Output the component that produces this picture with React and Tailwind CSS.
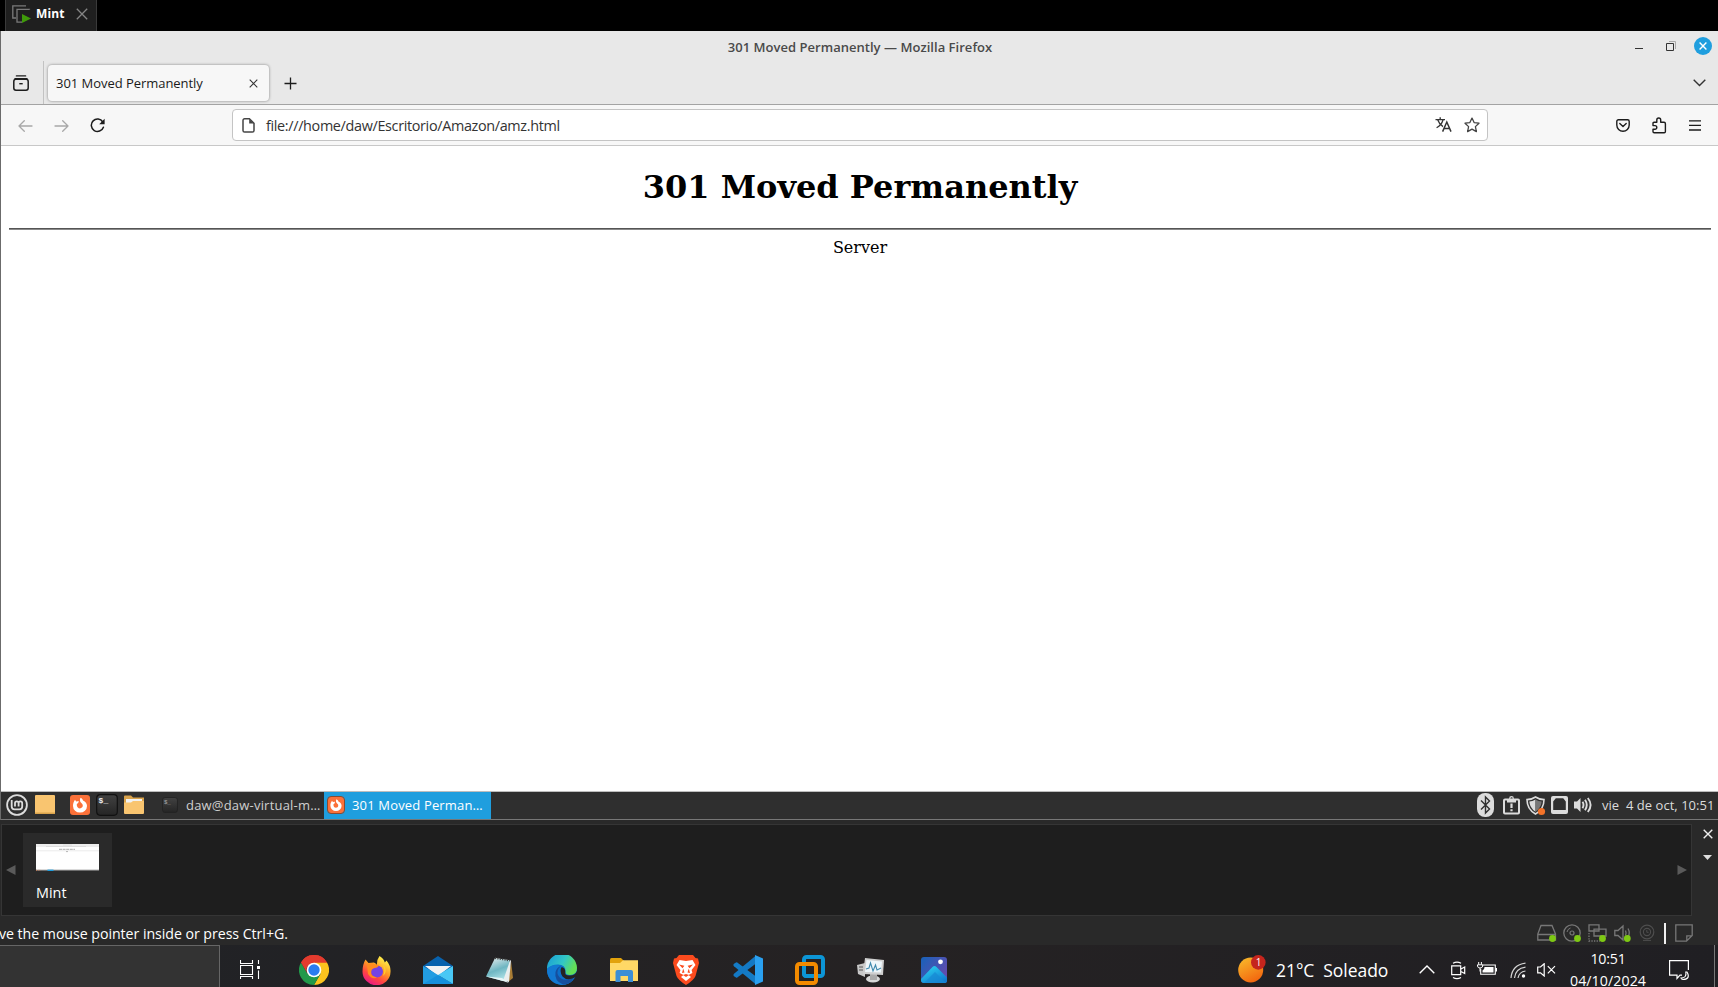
import React from "react";

const UI = "font-['Open_Sans','Noto_Sans',sans-serif] whitespace-pre";

function Svg({ w, h, box, className = "", children }) {
  return (
    <svg width={w} height={h} viewBox={box || `0 0 ${w} ${h}`} className={`block shrink-0 ${className}`} fill="none">
      {children}
    </svg>
  );
}

function VmTabs() {
  return (
    <div className="flex h-[31px] bg-black pl-[5px]">
      <div className="flex w-[92px] border-x border-[#3a3a3a] bg-[#1f1f1f] pl-1.5 pt-[5px]">
        <Svg w={20} h={19}>
          <path d="M4 13H.8V.8H14M17.5 4.5V4.3H5V17.2H10" stroke="#7a7a7a" strokeWidth="1.3" />
          <path d="M10 9L19 13.5 10 18z" fill="#3f9a0a" />
        </Svg>
        <span className={`${UI} ml-[4px] text-[12px] font-bold leading-[18px] tracking-[0.1px] text-white`}>Mint</span>
        <Svg w={12} h={12} className="ml-[12px] mt-[3px]">
          <path d="M.8.8L11.2 11.2M11.2.8L.8 11.2" stroke="#858585" strokeWidth="1.3" />
        </Svg>
      </div>
    </div>
  );
}

function TitleBar() {
  return (
    <div className="flex h-[30px] bg-[#e8e8e8]">
      <div className="w-[101px]" />
      <div className={`${UI} flex-1 pt-[7px] text-center text-[13px] font-semibold leading-[18px] tracking-[0.03px] text-[#4a4a4a]`}>
        301 Moved Permanently — Mozilla Firefox
      </div>
      <div className="flex w-[100px] pl-[17px] pt-[6px]">
        <Svg w={8} h={18}><path d="M0 11.5H8" stroke="#333" /></Svg>
        <Svg w={11} h={18} className="ml-[23px]">
          <path d="M3 4.5H9.5V12" stroke="#aaa" />
          <path d="M.5 6.5H7.5V13.5H.5z" stroke="#333" />
        </Svg>
        <Svg w={18} h={18} className="ml-[17px]">
          <circle cx="9" cy="9" r="9" fill="#1f9ede" />
          <path d="M5.6 5.6L12.4 12.4M12.4 5.6L5.6 12.4" stroke="#fff" strokeWidth="1.4" />
        </Svg>
      </div>
    </div>
  );
}

function TabStrip() {
  return (
    <div className="flex h-[44px] border-b border-[#a3a3a3] bg-[#e8e8e8]">
      <Svg w={16} h={16} className="ml-3 mt-[14px]">
        <path d="M3.4.9H12.6M2 3.8H14" stroke="#1c1c1c" strokeWidth="1.4" strokeLinecap="round" />
        <rect x=".8" y="4.2" width="14.4" height="11" rx="2.2" stroke="#1c1c1c" strokeWidth="1.5" />
        <path d="M6.3 8.7H9.7" stroke="#1c1c1c" strokeWidth="1.4" />
      </Svg>
      <div className="ml-[14px] w-px bg-[#c2c2c2]" />
      <div className="ml-1 mt-[4px] flex h-[36px] w-[221px] rounded-[4px] bg-[#f7f7f7] pl-[8px] shadow-[0_0_3px_rgba(0,0,0,0.45)]">
        <span className={`${UI} w-[193px] text-[13px] leading-[36px] tracking-[-0.04px] text-[#1a1a1a]`}>301 Moved Permanently</span>
        <Svg w={9} h={9} className="mt-[14px]"><path d="M.7.7L8.3 8.3M8.3.7L.7 8.3" stroke="#333" strokeWidth="1.1" /></Svg>
      </div>
      <Svg w={13} h={13} className="ml-[15px] mt-4"><path d="M6.5.5V12.5M.5 6.5H12.5" stroke="#1c1c1c" strokeWidth="1.3" /></Svg>
      <div className="flex-1" />
      <Svg w={13} h={8} className="mr-[12px] mt-[18px]"><path d="M.7.7L6.5 6.5 12.3.7" stroke="#333" strokeWidth="1.4" /></Svg>
    </div>
  );
}

function NavBar() {
  return (
    <div className="flex h-[41px] items-start border-b border-[#c8c8c8] bg-[#f7f7f7] pt-[4px]">
      <Svg w={15} h={12} className="ml-[17px] mt-[11px]"><path d="M14 6H1M6.3.7L1 6 6.3 11.3" stroke="#a8a8a8" strokeWidth="1.3" strokeLinecap="round" strokeLinejoin="round" /></Svg>
      <Svg w={15} h={12} className="ml-[21px] mt-[11px]"><path d="M1 6H14M8.7.7L14 6 8.7 11.3" stroke="#a8a8a8" strokeWidth="1.3" strokeLinecap="round" strokeLinejoin="round" /></Svg>
      <Svg w={16} h={16} className="ml-[21px] mt-[9px]">
        <path d="M12.8 4A6.2 6.2 0 1 0 13.4 9.2" stroke="#1c1c1c" strokeWidth="1.5" strokeLinecap="round" />
        <path d="M14.6.8V6.3H9.2z" fill="#1c1c1c" />
      </Svg>
      <div className="ml-[126px] flex h-[32px] w-[1256px] rounded-[4px] border border-[#c4c4c4] bg-white pl-[9px]">
        <Svg w={13} h={15} className="mt-[8px]">
          <path d="M2.6.8H7.4L12 5.2V12.4A1.6 1.6 0 0 1 10.4 14H2.6A1.6 1.6 0 0 1 1 12.4V2.4A1.6 1.6 0 0 1 2.6.8z" stroke="#444" strokeWidth="1.5" />
          <path d="M7.2 1V5.4H12z" fill="#444" />
        </Svg>
        <span className={`${UI} ml-[11px] flex-1 text-[14.4px] leading-[31px] tracking-[-0.34px] text-[#333]`}>file:///home/daw/Escritorio/Amazon/amz.html</span>
        <Svg w={17} h={15} className="mr-[12px] mt-[7px]">
          <path d="M.5 2.6H10M5.2.3V2.4M8 3C7 6.5 4.8 9 1.6 10.8M2.8 3C3.8 6 5.6 8 8 9.6" stroke="#333" strokeWidth="1.3" />
          <path d="M7.6 14.6L11.8 5 16 14.6M9.1 11.4H14.5" stroke="#333" strokeWidth="1.5" />
        </Svg>
        <Svg w={16} h={16} className="mr-[7px] mt-[7px]">
          <path d="M8 1.1L10.1 5.6 15 6.2 11.4 9.6 12.4 14.6 8 12.1 3.6 14.6 4.6 9.6 1 6.2 5.9 5.6z" stroke="#444" strokeWidth="1.3" strokeLinejoin="round" />
        </Svg>
      </div>
      <div className="flex-1" />
      <Svg w={14} h={13} className="mt-[10px]">
        <path d="M2.4.8H11.6A1.6 1.6 0 0 1 13.2 2.4V6A6.2 6.2 0 0 1 .8 6V2.4A1.6 1.6 0 0 1 2.4.8z" stroke="#1c1c1c" strokeWidth="1.4" />
        <path d="M3.8 4.6L7 7.6 10.2 4.6" stroke="#1c1c1c" strokeWidth="1.4" strokeLinecap="round" strokeLinejoin="round" />
      </Svg>
      <Svg w={15} h={17} className="ml-[22px] mt-[8px]">
        <path d="M2 5.2H4.8V3A1.9 1.9 0 0 1 8.7 3V5.2H12A1.5 1.5 0 0 1 13.4 6.7V14.5A1.2 1.2 0 0 1 12.2 15.7H2.2A1.2 1.2 0 0 1 1 14.5V12.2H3A1.8 1.8 0 0 0 3 8.6H1V6.2A1 1 0 0 1 2 5.2z" stroke="#1c1c1c" strokeWidth="1.4" strokeLinejoin="round" />
      </Svg>
      <Svg w={12} h={11} className="ml-[22px] mr-[17px] mt-[11px]"><path d="M0 .8H12M0 5.4H12M0 10H12" stroke="#1c1c1c" strokeWidth="1.3" /></Svg>
    </div>
  );
}

function Page() {
  return (
    <div className="h-[645px] bg-white pl-2 pr-[7px] pt-[22px] text-center font-['DejaVu_Serif',serif] text-black">
      <h1 className="text-[32px] font-bold leading-[38px]">301 Moved Permanently</h1>
      <div className="mt-[22px] h-[2px] border-t border-[#555] bg-[#8a8a8a]" />
      <p className="mt-[8px] text-[16px] leading-[19px]">Server</p>
    </div>
  );
}

function FirefoxMono({ size }) {
  return (
    <Svg w={size} h={size} box="0 0 20 20">
      <rect width="20" height="20" rx="3" fill="#fb7139" />
      <path d="M10.5 2.8C12 3.5 12.8 4.5 13 5.5 15.5 6.5 17 8.5 17 11A7 6.6 0 0 1 3 11C3 8.5 3.6 6.6 5 4.7L6.2 6.4 8.8 6 8.2 8 6.8 9C6.2 14.5 12.8 14.6 12.8 10.6 12.8 8.8 11.6 8.4 10.6 7.2 9.8 6 9.8 4.4 10.5 2.8z" fill="#fff" />
    </Svg>
  );
}

function Terminal({ size, dim }) {
  return (
    <Svg w={size} h={size} box="0 0 22 22">
      <rect x=".7" y=".7" width="20.6" height="20.6" rx="3.5" fill="url(#term)" stroke={dim ? "#222" : "#111"} strokeWidth="1.2" />
      <defs><linearGradient id="term" x2="0" y2="1"><stop stopColor="#424242" /><stop offset="1" stopColor="#252525" /></linearGradient></defs>
      <text x="2.6" y="9.3" fontSize="8" fontWeight="700" fontFamily="Liberation Mono, monospace" fill={dim ? "#999" : "#eee"}>$_</text>
    </Svg>
  );
}

function MintPanel() {
  return (
    <div className="flex h-[29px] border-b border-t border-b-[#777] border-t-[#bdbdbd] bg-[#2f2f2f]">
      <Svg w={22} h={22} className="ml-[5px] mt-[2px]">
        <circle cx="11" cy="11" r="9.9" stroke="#dcdcdc" strokeWidth="1.8" />
        <path d="M5.7 6V12.5Q5.7 15.3 8.5 15.3H13.4Q16.2 15.3 16.2 12.5V9.2Q16.2 7.4 14.3 7.4 12.6 7.4 12.6 9.2V12.6M12.6 9.2Q12.6 7.4 10.8 7.4 9 7.4 9 9.2V12.6" stroke="#dcdcdc" strokeWidth="1.8" />
      </Svg>
      <Svg w={20} h={19} className="ml-[7px] mt-[3px]"><rect width="20" height="19" rx="1" fill="#f9c570" /><path d="M0 17.5H20V19H0z" fill="#d9a34c" /></Svg>
      <div className="ml-[15px] mt-[3px]"><FirefoxMono size={20} /></div>
      <div className="ml-[6px] mt-[2px]"><Terminal size={22} /></div>
      <Svg w={20} h={19} className="ml-[6px] mt-[3px]">
        <path d="M0 1.5Q0 .5 1 .5H7L9 2.5H20V18H0z" fill="#d9a34c" />
        <rect x="2" y="4" width="16" height="7" fill="#f2f2f2" />
        <path d="M0 7.5H7L9 6H20V18Q20 19 19 19H1Q0 19 0 18z" fill="#f9c570" />
      </Svg>
      <div className="ml-[18px] mt-[5px]"><Terminal size={16} dim /></div>
      <span className={`${UI} ml-[8px] w-[138px] text-[13px] leading-[27px] tracking-[0.2px] text-[#cfcfcf]`}>daw@daw-virtual-m…</span>
      <div className="flex w-[167px] bg-[#1f9ede] pl-[4px]">
        <div className="mt-[5px] h-[16px] w-[16px] rounded-[3px] outline outline-1 outline-[#8a4a30]"><FirefoxMono size={16} /></div>
        <span className={`${UI} ml-[8px] text-[13px] leading-[27px] tracking-[0.16px] text-white`}>301 Moved Perman…</span>
      </div>
      <div className="flex-1" />
      <Svg w={17} h={24} className="mt-[1px]">
        <rect width="17" height="24" rx="8" fill="#dcdcdc" />
        <path d="M4 7.5L12.5 16 8.5 20V4L12.5 8 4 16.5" stroke="#2f2f2f" strokeWidth="1.4" />
      </Svg>
      <Svg w={17} h={19} className="ml-[9px] mt-[4px]">
        <rect x="1" y="3.5" width="15" height="14" rx="1" stroke="#dcdcdc" strokeWidth="2" />
        <path d="M4 3.5H13V6.5H4z" fill="#dcdcdc" /><circle cx="8.5" cy="2.5" r="1.8" stroke="#dcdcdc" strokeWidth="1.2" />
        <path d="M7.4 7.5H9.6V12H7.4zM7.4 13.2H9.6V15.2H7.4z" fill="#dcdcdc" />
      </Svg>
      <Svg w={20} h={20} className="ml-[6px] mt-[4px]">
        <path d="M9.5 1Q13 3.5 18 3.6 18 13.5 9.5 18 1 13.5 1 3.6 6 3.5 9.5 1z" stroke="#dcdcdc" strokeWidth="1.6" />
        <path d="M9.5 3.4Q6.6 5.3 3.3 5.4 4 12 9.5 15.8z" fill="#dcdcdc" /><path d="M9.5 3.4Q12.4 5.3 15.7 5.4 15 12 9.5 15.8z" fill="#777" />
        <circle cx="15.5" cy="15.5" r="3.6" fill="#f37329" />
      </Svg>
      <Svg w={17} h={18} className="ml-[5px] mt-[4px]">
        <rect width="17" height="18" rx="2" fill="#dcdcdc" />
        <path d="M2.2 5.4L4.8 2.2H12.2L14.8 5.4V14H2.2z" fill="#2f2f2f" />
      </Svg>
      <Svg w={19} h={18} className="ml-[6px] mt-[4px]">
        <path d="M0 5.5H3L6.5 2V16L3 12.5H0z" fill="#dcdcdc" />
        <path d="M8.5 5.8Q10.5 9 8.5 12.2M11 3.8Q14.5 9 11 14.2M13.8 2Q19.4 9 13.8 16" stroke="#dcdcdc" strokeWidth="1.9" />
      </Svg>
      <span className={`${UI} ml-[9px] mr-[3px] w-[113px] text-[13px] leading-[27px] tracking-[0.03px] text-[#dcdcdc]`}>vie  4 de oct, 10:51</span>
    </div>
  );
}

function Library() {
  return (
    <div className="flex h-[96px] bg-[#292929] pl-px pt-[4px]">
      <div className="flex h-[92px] w-[1691px] border border-[#353535] bg-[#1e1e1e]">
        <Svg w={10} h={10} className="ml-[3.5px] mt-[40px]"><path d="M9.5 0V10L0 5z" fill="#5a5a5a" /></Svg>
        <div className="ml-[7.5px] mt-[8px] h-[74px] w-[89px] bg-[#2a2a2a] pl-[13px] pt-[11px]">
          <Svg w={63} h={27}>
            <rect width="63" height="27" fill="#fff" /><rect width="63" height="3" fill="#ededed" />
            <path d="M10 2.5H50M27 1H36" stroke="#d8d8d8" strokeWidth=".8" /><path d="M23 5.3H39" stroke="#aaa" strokeWidth="1" strokeDasharray="3 .6" />
            <path d="M0 6.8H63" stroke="#ddd" strokeWidth=".6" /><path d="M30 7.6H32" stroke="#999" strokeWidth=".7" />
            <path d="M0 26.3H63" stroke="#494949" /><path d="M0 26.3H5" stroke="#c77950" strokeDasharray="1 1.4" /><path d="M11.5 26.3H17.5" stroke="#1f9ede" strokeWidth="1.4" />
          </Svg>
          <div className={`${UI} mt-[12px] text-[14.4px] leading-[20px] tracking-[0px] text-white`}>Mint</div>
        </div>
        <div className="flex-1" />
        <Svg w={10} h={10} className="mr-[4.5px] mt-[40px]"><path d="M.5 0V10L10 5z" fill="#5a5a5a" /></Svg>
      </div>
      <div className="pl-[10.5px] pt-[5px]">
        <Svg w={10} h={10}><path d="M.7.7L9.3 9.3M9.3.7L.7 9.3" stroke="#eee" strokeWidth="1.4" /></Svg>
        <Svg w={9} h={5} className="mt-[16px]"><path d="M0 0H9L4.5 5z" fill="#ddd" /></Svg>
      </div>
    </div>
  );
}

function Dot({ x, y }) {
  return <circle cx={x} cy={y} r="3.4" fill="#7ec814" />;
}

function StatusBar() {
  return (
    <div className="flex h-[29px] overflow-hidden bg-[#292929]">
      <span className={`${UI} -ml-[1px] pt-[7px] text-[14.2px] leading-[22px] tracking-[-0.05px] text-white`}>ve the mouse pointer inside or press Ctrl+G.</span>
      <div className="flex-1" />
      <Svg w={20} h={20} className="mt-[8px]">
        <path d="M4 1.5H15L18.5 10V16H.8V10z M.8 10.5H18.5" stroke="#777" strokeWidth="1.3" /><Dot x={15.5} y={14.5} />
      </Svg>
      <Svg w={19} h={20} className="ml-[6px] mt-[8px]">
        <circle cx="9" cy="9" r="8.2" stroke="#777" strokeWidth="1.3" /><circle cx="9" cy="9" r="2" stroke="#777" strokeWidth="1.2" /><path d="M4 8Q4.5 5 7.5 4" stroke="#777" /><Dot x={14.5} y={14.5} />
      </Svg>
      <Svg w={19} h={20} className="ml-[6px] mt-[8px]">
        <path d="M1 .8H11V7H1zM6 5.2H18V12H6z" stroke="#777" strokeWidth="1.3" /><path d="M1 9V17H12" stroke="#777" strokeDasharray="1.3 1.3" strokeWidth="1.3" /><Dot x={14.5} y={14.5} />
      </Svg>
      <Svg w={18} h={20} className="ml-[7px] mt-[8px]">
        <path d="M.8 6.5H4L9 2V16L4 11.5H.8zM11.5 6.5Q12.7 9 11.5 11.5M14 4.5Q16.5 9 14 13" stroke="#777" strokeWidth="1.3" /><Dot x={13.3} y={14.5} />
      </Svg>
      <Svg w={16} h={17} className="ml-[7px] mt-[8px]">
        <circle cx="8" cy="8" r="6.8" stroke="#4e4e4e" strokeWidth="1.2" /><circle cx="8" cy="8" r="3.6" stroke="#4e4e4e" strokeWidth="1.1" /><path d="M7.8 6V8.3H9.6M4 16.4H12" stroke="#4e4e4e" />
      </Svg>
      <div className="ml-[9px] mt-[7px] h-[21px] w-[2px] bg-[#f0f0f0]" />
      <Svg w={18} h={18} className="ml-[9px] mr-[25px] mt-[8px]"><path d="M.8.8H17.2V11.5L11.5 17.2H.8zM17 11.8H11.8V17" stroke="#777" strokeWidth="1.3" /></Svg>
    </div>
  );
}

function Cell({ children, first }) {
  return <div className={`flex h-full items-center justify-center ${first ? "mr-[5px] w-[57px]" : "w-[62px]"}`}>{children}</div>;
}

function Taskbar() {
  return (
    <div className="flex h-[42px] overflow-hidden bg-gradient-to-r from-[#202226] via-[#252223] to-[#201f23]">
      <div className="h-[60px] w-[220px] shrink-0 border-r border-t border-[#666] bg-[#333]" />
      <div className="flex h-[50px] pl-px">
        <Cell first>
          <Svg w={20} h={19} className="-mt-px"><path d="M.5 0V3.5H12.5V0M.5 5.5H12.5V14.5H.5zM.5 19V16.5H12.5V19M18.5 0V4M18.5 10.5V19" stroke="#fff" strokeWidth="1.1" /><rect x="17" y="6" width="3" height="3" fill="#fff" /></Svg>
        </Cell>
        <Cell>
          <Svg w={30} h={30}>
            <path d="M15 15L2 7.5A15 15 0 0 1 28 7.5z" fill="#e33b2e" /><path d="M15 15V7.5H28A15 15 0 0 1 15 30L21.5 18.7z" fill="#fcc31e" />
            <path d="M15 15L21.5 18.7 15 30A15 15 0 0 1 2 7.5L8.5 18.8z" fill="#22994a" /><path d="M2 7.5A15 15 0 0 1 28 7.5H15A7.5 7.5 0 0 0 8.5 18.7z" fill="#e33b2e" />
            <circle cx="15" cy="15" r="7.3" fill="#fff" /><circle cx="15" cy="15" r="5.7" fill="#2b7cf0" />
          </Svg>
        </Cell>
        <Cell>
          <Svg w={29} h={29}>
            <defs><linearGradient id="ff" x1=".8" y1=".1" x2=".3" y2="1"><stop stopColor="#fff04a" /><stop offset=".4" stopColor="#ff9a24" /><stop offset=".7" stopColor="#ff4641" /><stop offset="1" stopColor="#e8178a" /></linearGradient></defs>
            <path d="M17.5 0Q22 2.6 22.8 6.5L24.5 4.5Q29 10 28.5 16A14 13.5 0 0 1 .5 15.5Q.5 8.5 3.5 3.5L6.5 7 12 6.5Q14.5 7.5 15 9.5 14.5 4 17.5 0z" fill="url(#ff)" />
            <circle cx="15" cy="15.5" r="6" fill="#7543e5" /><path d="M5 9Q9 6 14 8.5L17 9Q16 12 12.5 12 9 13 9.2 16 8 20 15 21.5 10 24 6 18z" fill="#ff8c20" /><path d="M18 7Q25 12 21 20 25 17 23 11z" fill="#ffd12e" />
          </Svg>
        </Cell>
        <Cell>
          <Svg w={30} h={28}>
            <path d="M0 10L15 0 30 10V20H0z" fill="#0862ad" /><path d="M2 10H28L15 20z" fill="#f3f3f3" />
            <path d="M0 10L15 19 30 28H0z" fill="#229de2" /><path d="M30 10L15 19 30 28z" fill="#49c8f5" /><path d="M15 19L30 28H0z" fill="#1690dc" />
          </Svg>
        </Cell>
        <Cell>
          <Svg w={28} h={28}>
            <defs><linearGradient id="np" x1=".3" x2=".7" y2="1"><stop stopColor="#d9e6e8" /><stop offset=".5" stopColor="#6eb6c2" /><stop offset="1" stopColor="#b8e8ec" /></linearGradient></defs>
            <path d="M25 5L27 22 22 26z" fill="#a87c35" /><path d="M9 2L25 4.5 23 26 14 24z" fill="#e9eeee" /><path d="M9 2L24 4.5 17 25 0 20.5z" fill="url(#np)" /><path d="M9 2L24 4.5" stroke="#444" strokeWidth="2" strokeDasharray="1.2 1.2" /><path d="M0 20.5L17 25 23 27 16 22z" fill="#e7f6f7" />
          </Svg>
        </Cell>
        <Cell>
          <Svg w={30} h={30}>
            <defs><linearGradient id="ed" x1="0" x2="1" y2=".4"><stop stopColor="#179ad8" /><stop offset=".6" stopColor="#32c6c6" /><stop offset="1" stopColor="#63df56" /></linearGradient></defs>
            <circle cx="15" cy="15" r="15" fill="#0b6fca" /><path d="M0 14A15 15 0 0 1 30 13Q30 20 23 20 18 20 18.5 16.5 19 10 11 9.5 4 9.5 0 14z" fill="url(#ed)" />
            <path d="M14 11Q8 14 9.5 20 12 27 21 25.5 25 25 28 22 23 30 15 30 0 28 0 14 6 8 14 11z" fill="#1279d2" /><path d="M14 11Q9 15 11 20 15 28 27 22.5 23 30 16 29.5 7 26 8.5 17 10 12 14 11z" fill="#164f9e" />
            <path d="M14.7 12Q18.5 13 18.3 17 17.5 20.5 22 20.5 28 20.8 30 16V21L27.8 22.5Q20 26.5 15.5 21.5 12 16 14.7 12z" fill="#252223" />
          </Svg>
        </Cell>
        <Cell>
          <Svg w={28} h={24} className="-mt-px">
            <path d="M0 1.5Q0 0 1.5 0H11L14 3V9H0z" fill="#e2a20c" /><path d="M0 5H10L13 2.2H28V23H0z" fill="#ffd866" /><path d="M5.5 24V14Q5.5 12 7.5 12H21Q23 12 23 14V24H18V18H10.5V24z" fill="#3c8ed5" />
          </Svg>
        </Cell>
        <Cell>
          <Svg w={26} h={30}>
            <path d="M6 0H20L22.5 3 25 3.5 26 8 22.5 21Q21 25 13 30 5 25 3.5 21L0 8 1 3.5 3.5 3z" fill="#fb4b1e" />
            <path d="M6.5 5L13 6 19.5 5 22.5 10 18.6 15 19.4 18 15.5 20 18 22 13 26 8 22 10.5 20 6.6 18 7.4 15 3.5 10z" fill="#fff" />
            <path d="M6 9.4L11.4 10.8 9.5 13.2zM20 9.4L14.6 10.8 16.5 13.2zM10.2 13.5L11.5 17.5 9 18zM15.8 13.5L14.5 17.5 17 18zM10 20L13 19 16 20 13 22z" fill="#fb4b1e" />
          </Svg>
        </Cell>
        <Cell>
          <Svg w={30} h={30}>
            <path d="M1 8.8L3 7.4Q3.6 7 4.3 7.5L23 21.5V29.5L1 11.3Q-.2 10 1 8.8z" fill="#147bc5" /><path d="M1 21.2L3 22.6Q3.6 23 4.3 22.5L23 8.5V.5L1 18.7Q-.2 20 1 21.2z" fill="#1479c4" /><path d="M22 0L30 3.5V26.5L22 30z" fill="#2aa0f0" />
          </Svg>
        </Cell>
        <Cell>
          <Svg w={30} h={30}>
            <rect x="9" y="2" width="19" height="19" rx="2.5" stroke="#0c95d6" strokeWidth="4" /><rect x="2" y="9" width="19" height="19" rx="2.5" stroke="#f38b00" strokeWidth="4" /><path d="M9 15V18.5Q9 21 11.5 21H15" stroke="#0c95d6" strokeWidth="4" />
          </Svg>
        </Cell>
        <Cell>
          <Svg w={28} h={26} className="-ml-[2px]">
            <path d="M0 8L8 6V20L1 17z" fill="#c8c8c8" /><path d="M2 10H6M2 13H6" stroke="#555" /><ellipse cx="16" cy="22" rx="7" ry="3.5" fill="#d8d8d8" /><path d="M13 17H20V23H13z" fill="#aaa" />
            <path d="M8 1L27 3 26 18 6 17z" fill="#cfcfcf" /><path d="M9.5 3L25 4.5 24 15.5 8 15z" fill="#eef6fa" /><path d="M9 12L12 11 13.5 6 16 14 18.5 8 20 13 24 11" stroke="#3f89ae" strokeWidth="1.1" />
          </Svg>
        </Cell>
        <Cell>
          <Svg w={26} h={26}>
            <defs><linearGradient id="ph" x2="1" y2=".7"><stop stopColor="#1762b9" /><stop offset="1" stopColor="#654bae" /></linearGradient><linearGradient id="ph2" x2=".7" y2="1"><stop stopColor="#2edcf4" /><stop offset="1" stopColor="#117bd1" /></linearGradient></defs>
            <rect width="26" height="26" rx="3" fill="url(#ph)" /><path d="M0 22L11.5 10Q13.5 8 15.5 10L26 20.5V24Q26 26 23 26H3Q0 26 0 23z" fill="url(#ph2)" /><path d="M3 26L14 15 25 26z" fill="#1789d3" opacity=".7" /><circle cx="19.5" cy="4.8" r="2.4" fill="#fff" />
          </Svg>
        </Cell>
      </div>
      <div className="flex-1" />
      <div className="flex h-[50px] shrink-0">
        <Svg w={28} h={28} className="mt-[10px]">
          <defs><linearGradient id="sun" x2=".5" y2="1"><stop stopColor="#f8be2c" /><stop offset="1" stopColor="#f36a10" /></linearGradient></defs>
          <circle cx="12.7" cy="15" r="12.5" fill="url(#sun)" /><circle cx="20.3" cy="7.4" r="7.3" fill="#c5251d" /><text x="17.8" y="11" fontSize="10" fill="#fff" fontFamily="Open Sans, sans-serif">1</text>
        </Svg>
        <span className={`${UI} ml-[10px] w-[125px] text-[17.5px] leading-[51px] tracking-[-0.05px] text-white`}>21°C  Soleado</span>
        <Svg w={16} h={9} className="ml-[18px] mt-[20px]"><path d="M.7 8.3L8 1 15.3 8.3" stroke="#fff" strokeWidth="1.4" /></Svg>
        <Svg w={15} h={19} className="ml-[16px] mt-[16px]"><path d="M.7 4.8H9.7V13.7H.7zM10 8L13.7 6V12.5L10 10.5M2 2.2Q6 .1 10 2.2M2 16.5Q6 18.7 10 16.5" stroke="#fff" strokeWidth="1.2" /></Svg>
        <Svg w={20} h={14} className="ml-[11px] mt-[17px]"><path d="M5.5 3H18.3V12.3H3.7V7" stroke="#fff" strokeWidth="1.1" /><path d="M7.5 5H16.5V10.5H5.5V8.5Q7.5 8 7.5 5zM18.5 6H20V9.5H18.5z" fill="#fff" /><path d="M1.7 0V2.5M4.4 0V2.5M.5 2.8H5.7V4Q5.5 6 3 6 .7 6 .5 4zM3 6V9.5" stroke="#fff" /></Svg>
        <Svg w={16} h={17} className="ml-[13px] mt-[17px]"><path d="M1 16Q2 3 15.5 1.2M4.5 16Q5.5 6.5 15.5 5.2M8 16Q9 10 15.5 9" stroke="#d4d4d4" strokeWidth="1.2" /><circle cx="13.5" cy="14" r="1.7" fill="#fff" /></Svg>
        <Svg w={19} h={14} className="ml-[11px] mt-[18px]"><path d="M.7 4H3.5L7.2.7V13L3.5 9.8H.7zM10.8 3.2L18 10.4M18 3.2L10.8 10.4" stroke="#fff" strokeWidth="1.2" /></Svg>
        <div className={`${UI} ml-[8px] w-[88px] text-center text-[14.2px] leading-[22px] text-white`}>
          <div className="pt-[3px] tracking-[-0.2px]">10:51</div><div className="tracking-[0.08px]">04/10/2024</div>
        </div>
        <Svg w={21} h={21} className="ml-[17px] mt-[15px]"><path d="M13 15.2H11L8 18.5V15.2H.6V.7H19.4V10" stroke="#fff" strokeWidth="1.2" /><path d="M18 12Q22 19 14 19.5 12.5 19.3 12 18 18 18 16.8 12z" stroke="#fff" strokeWidth="1.1" /></Svg>
        <div className="ml-[24px] mr-[3px] w-px bg-[#777]" />
      </div>
    </div>
  );
}

export default function App() {
  return (
    <div className="flex h-[987px] w-[1718px] flex-col overflow-hidden bg-[#292929]">
      <VmTabs />
      <div className="border-l border-[#6b6b6b]">
        <TitleBar />
        <TabStrip />
        <NavBar />
        <Page />
        <MintPanel />
      </div>
      <Library />
      <StatusBar />
      <Taskbar />
    </div>
  );
}
